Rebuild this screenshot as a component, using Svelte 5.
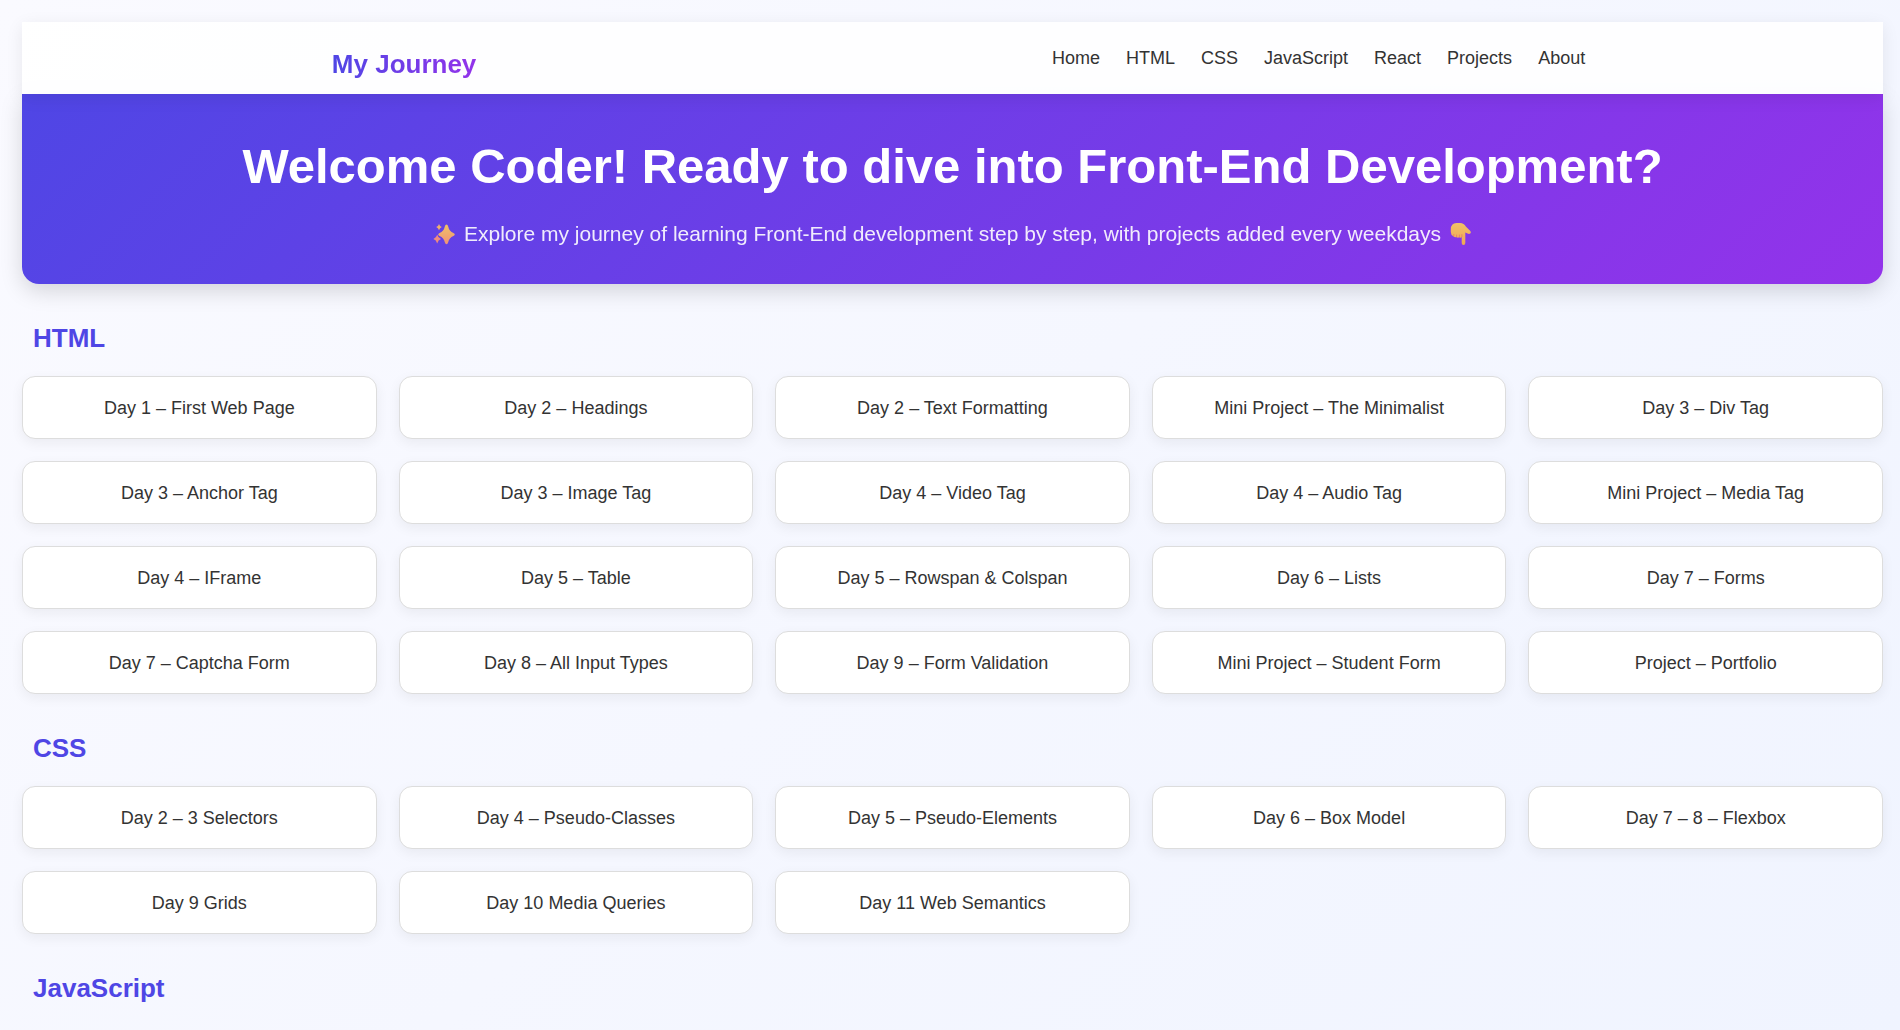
<script>
  const links = ['Home', 'HTML', 'CSS', 'JavaScript', 'React', 'Projects', 'About'];

  const sections = [
    {
      title: 'HTML',
      days: [
        'Day 1 – First Web Page',
        'Day 2 – Headings',
        'Day 2 – Text Formatting',
        'Mini Project – The Minimalist',
        'Day 3 – Div Tag',
        'Day 3 – Anchor Tag',
        'Day 3 – Image Tag',
        'Day 4 – Video Tag',
        'Day 4 – Audio Tag',
        'Mini Project – Media Tag',
        'Day 4 – IFrame',
        'Day 5 – Table',
        'Day 5 – Rowspan & Colspan',
        'Day 6 – Lists',
        'Day 7 – Forms',
        'Day 7 – Captcha Form',
        'Day 8 – All Input Types',
        'Day 9 – Form Validation',
        'Mini Project – Student Form',
        'Project – Portfolio'
      ]
    },
    {
      title: 'CSS',
      days: [
        'Day 2 – 3 Selectors',
        'Day 4 – Pseudo-Classes',
        'Day 5 – Pseudo-Elements',
        'Day 6 – Box Model',
        'Day 7 – 8 – Flexbox',
        'Day 9 Grids',
        'Day 10 Media Queries',
        'Day 11 Web Semantics'
      ]
    },
    { title: 'JavaScript', days: [] }
  ];
</script>

<div class="page">
  <header class="topbar">
    <div class="logo">My Journey</div>
    <nav>
      <ul>
        {#each links as link}
          <li><a href={'#' + link.toLowerCase()}>{link}</a></li>
        {/each}
      </ul>
    </nav>
  </header>

  <section class="hero" id="home">
    <h1>Welcome Coder! Ready to dive into Front-End Development?</h1>
    <p>
      <svg class="emoji" viewBox="0 0 22 22" aria-hidden="true">
        <defs>
          <linearGradient id="spark" x1="0" y1="0" x2="0" y2="1">
            <stop offset="0" stop-color="#ffd257" />
            <stop offset="1" stop-color="#ff9a6c" />
          </linearGradient>
        </defs>
        <path fill="url(#spark)" d="M13.5 1.5Q14.7 1.5 15.1 3.2Q16.2 8.4 20.4 9.9Q21.8 10.5 21.8 11.4Q21.8 12.3 20.4 12.9Q16.2 14.4 15.1 19.4Q14.7 21.2 13.5 21.2Q12.3 21.2 11.9 19.4Q10.8 14.4 6.6 12.9Q5.2 12.3 5.2 11.4Q5.2 10.5 6.6 9.9Q10.8 8.4 11.9 3.2Q12.3 1.5 13.5 1.5Z" />
        <path fill="#ffbc62" d="M6 1Q6.7 3.5 8.8 4.1Q6.7 4.8 6 7.2Q5.3 4.8 3.2 4.1Q5.3 3.5 6 1Z" />
        <path fill="#ff9472" d="M4.2 11.8Q5.1 15 8 15.9Q5.1 16.8 4.2 20.4Q3.3 16.8 .4 15.9Q3.3 15 4.2 11.8Z" />
      </svg>
      <span>Explore my journey of learning Front-End development step by step, with projects added every weekdays</span>
      <svg class="emoji" viewBox="0 0 22 22" aria-hidden="true">
        <defs>
          <linearGradient id="hand" x1="0" y1="0" x2="0" y2="1">
            <stop offset="0" stop-color="#ffd05a" />
            <stop offset="1" stop-color="#fbb445" />
          </linearGradient>
        </defs>
        <path fill="url(#hand)" d="M6.5 0H10Q14 0 15.800 3.500L20.300 8Q21.400 9.500 20.200 10.600Q19 11.500 17.500 10.600L15.300 9.600V20Q15.300 22 13.500 22Q11.700 22 11.700 20V14Q10.600 15.200 9.200 14.300Q7.800 15.300 6.400 14.100Q4.800 14.900 3.400 13.300Q.8 12 .8 9V6.500Q.8 0 6.500 0Z" />
        <path fill="none" stroke="#f08f5a" stroke-linecap="round" d="M3.8 12.8V11.4M6.6 13.8V12M9.4 13.8V12M11.9 13.6V11.6" />
      </svg>
    </p>
  </section>

  <main>
    {#each sections as section}
      <section id={section.title.toLowerCase()}>
        <h2>{section.title}</h2>
        <div class="grid">
          {#each section.days as day}
            <a class="card" href={'#' + section.title.toLowerCase()}>{day}</a>
          {/each}
        </div>
      </section>
    {/each}
  </main>
</div>

<style>
  :global(body) {
    margin: 0;
  }

  .page {
    box-sizing: border-box;
    min-height: 100vh;
    padding: 22px 17px 0 22px;
    background: linear-gradient(135deg, #fafaff, #f0f4ff);
    font-family: 'Liberation Sans', Arial, sans-serif;
    font-size: 18px;
    line-height: 28px;
    color: #333;
  }

  .topbar {
    position: relative;
    z-index: 1;
    display: flex;
    justify-content: space-around;
    align-items: flex-start;
    padding: 22px 10px 16px 22px;
    background: rgba(255, 255, 255, 0.85);
    box-shadow: 0 4px 16px rgba(0, 0, 0, 0.08);
  }

  .logo {
    padding-top: 6px;
    font-size: 26px;
    line-height: 28px;
    font-weight: 700;
    background: linear-gradient(90deg, #4f46e5, #9333ea);
    background-clip: text;
    color: transparent;
  }

  ul {
    display: flex;
    gap: 26px;
    margin: 0;
    padding: 0;
    list-style: none;
  }

  a {
    color: #333;
    text-decoration: none;
  }

  .hero {
    padding: 44px 22px 32px;
    border-radius: 0 0 17px 17px;
    background: linear-gradient(135deg, #4f46e5, #9333ea);
    box-shadow: 0 7px 22px rgba(0, 0, 0, 0.15);
    color: #fff;
    text-align: center;
  }

  h1 {
    margin: 0 0 22px;
    font-size: 49px;
    line-height: 56px;
  }

  .hero p {
    display: flex;
    justify-content: center;
    align-items: center;
    gap: 9px;
    margin: 0;
    font-size: 21px;
    line-height: 36px;
    opacity: 0.9;
  }

  .emoji {
    flex: none;
    width: 22px;
    height: 22px;
  }

  h2 {
    margin: 0;
    padding: 38px 11px 22px;
    font-size: 26px;
    line-height: 32px;
    color: #4f46e5;
  }

  .grid {
    display: grid;
    grid-template-columns: repeat(auto-fill, minmax(300px, 1fr));
    gap: 22px;
  }

  .card {
    padding: 17px 20px 16px;
    border: 1px solid #ddd;
    border-radius: 13px;
    background: #fff;
    box-shadow: 0 4px 13px rgba(0, 0, 0, 0.06);
    text-align: center;
  }
</style>
